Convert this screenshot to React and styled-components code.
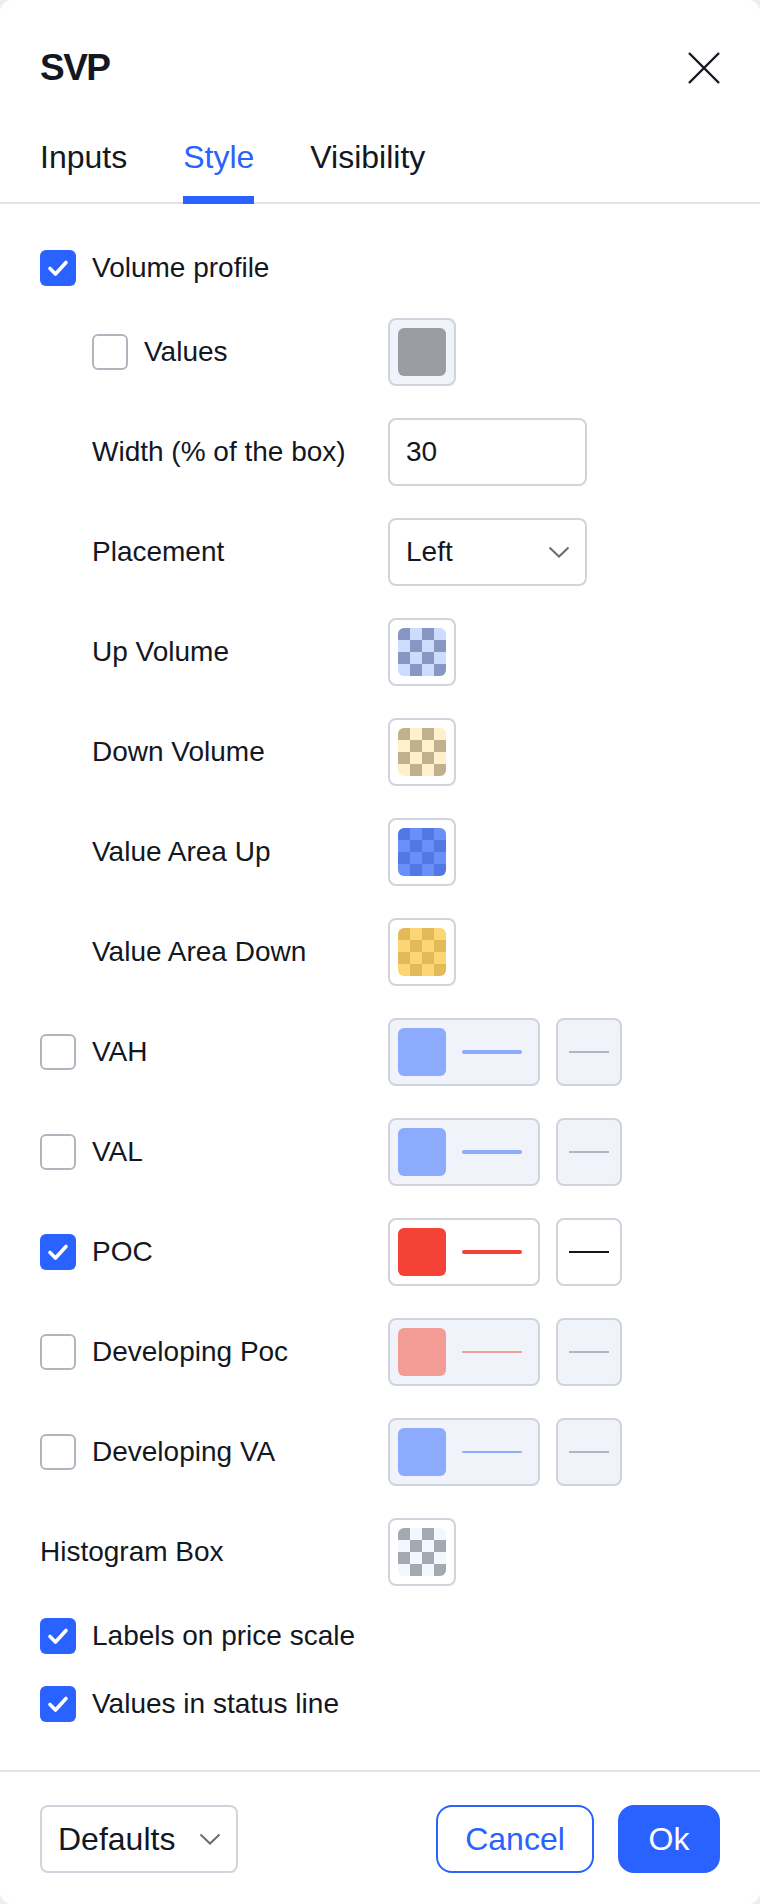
import React from "react";
import styled, {createGlobalStyle, css} from "styled-components";

const GlobalStyle = createGlobalStyle`
    html, body {
        margin: 0;
        padding: 0;
        background: #eceef2;
    }
    body {
        font-family: "Liberation Sans", Arial, sans-serif;
        color: #131722;
    }
    * {
        box-sizing: border-box;
    }
`;

const Dialog = styled.div`
    display: flex;
    flex-direction: column;
    width: 760px;
    height: 1904px;
    background: #fff;
    border-radius: 12px;
    overflow: hidden;
`;

const Header = styled.div`
    padding: 40px 40px 0;
`;

const TitleRow = styled.div`
    display: flex;
    justify-content: space-between;
    align-items: center;
    height: 56px;
`;

const Title = styled.h1`
    margin: 0;
    font-size: 37px;
    line-height: 56px;
    font-weight: 700;
    letter-spacing: -1.5px;
`;

const CloseButton = styled.button`
    display: flex;
    align-items: center;
    justify-content: center;
    width: 56px;
    height: 56px;
    margin-right: -12px;
    padding: 0;
    border: none;
    background: transparent;
    color: #131722;
`;

const Tabs = styled.div`
    display: flex;
    gap: 56px;
    margin: 0 -40px;
    padding: 0 40px;
    border-bottom: 2px solid #e0e3eb;
`;

const Tab = styled.div`
    margin-bottom: -2px;
    padding: 41px 0 27px;
    font-size: 32px;
    line-height: 40px;
    color: ${p => (p.$active ? "#2962ff" : "#131722")};
    ${p => p.$active && css`
        box-shadow: inset 0 -8px 0 #2962ff;
    `}
`;

const Body = styled.div`
    display: flex;
    flex-direction: column;
    gap: 32px;
    flex: 1;
    padding: 46px 40px 48px;
`;

const Row = styled.div`
    display: grid;
    grid-template-columns: 348px auto;
    align-items: center;
    min-height: ${p => (p.$short ? "36px" : "68px")};
`;

const LabelCell = styled.label`
    display: flex;
    align-items: center;
    gap: 16px;
    padding-left: ${p => (p.$indent ? "52px" : "0")};
    font-size: 28px;
    line-height: 36px;
    white-space: nowrap;
`;

const Box = styled.span`
    display: flex;
    align-items: center;
    justify-content: center;
    flex: none;
    width: 36px;
    height: 36px;
    border-radius: 6px;
    background: ${p => (p.$checked ? "#2962ff" : "#fff")};
    border: ${p => (p.$checked ? "none" : "2px solid #b2b5be")};
`;

const Controls = styled.div`
    display: flex;
    align-items: center;
    gap: 16px;
`;

const ColorButton = styled.div`
    display: flex;
    align-items: center;
    width: ${p => (p.$wide ? "152px" : "68px")};
    height: 68px;
    padding: 8px;
    border: 2px solid #d1d4dc;
    border-radius: 8px;
    background: ${p => (p.$disabled ? "#f0f3fa" : "#fff")};
`;

const Swatch = styled.span`
    flex: none;
    width: 48px;
    height: 48px;
    border-radius: 6px;
    background: ${p => p.$color};
    ${p => p.$checker && css`
        background: repeating-conic-gradient(${p.$checker[1]} 0 25%, ${p.$checker[0]} 0 50%) 0 0 / 24px 24px;
    `}
`;

const LineSample = styled.span`
    flex: none;
    width: 60px;
    height: ${p => p.$thickness}px;
    margin-left: 16px;
    border-radius: 2px;
    background: ${p => p.$color};
`;

const LineStyleButton = styled.div`
    display: flex;
    align-items: center;
    justify-content: center;
    width: 66px;
    height: 68px;
    border: 2px solid #d1d4dc;
    border-radius: 8px;
    background: ${p => (p.$disabled ? "#f0f3fa" : "#fff")};

    span {
        width: 40px;
        height: 2px;
        background: ${p => (p.$disabled ? "#b2b5be" : "#131722")};
    }
`;

const TextField = styled.input`
    width: 199px;
    height: 68px;
    padding: 0 16px;
    border: 2px solid #d1d4dc;
    border-radius: 8px;
    font-family: inherit;
    font-size: 28px;
    color: #131722;
    background: #fff;
    outline: none;
`;

const SelectBox = styled.div`
    display: flex;
    align-items: center;
    justify-content: space-between;
    width: ${p => p.$width || 199}px;
    height: 68px;
    padding: 0 15px 0 16px;
    border: 2px solid #d1d4dc;
    border-radius: 8px;
    font-size: ${p => p.$fontSize || 28}px;
    background: #fff;
`;

const Footer = styled.div`
    display: flex;
    align-items: center;
    justify-content: space-between;
    padding: 33px 40px 31px;
    border-top: 2px solid #e0e3eb;
`;

const Actions = styled.div`
    display: flex;
    gap: 24px;
`;

const Button = styled.button`
    height: 68px;
    width: ${p => p.$width}px;
    border-radius: 16px;
    font-family: inherit;
    font-size: 32px;
    border: 2px solid #2962ff;
    color: ${p => (p.$primary ? "#fff" : "#2962ff")};
    background: ${p => (p.$primary ? "#2962ff" : "#fff")};
`;

const Checkbox = ({checked}) => (
    <Box $checked={checked}>
        {checked && (
            <svg width="22" height="18" viewBox="0 0 22 18">
                <path d="M3 9.5l5.5 5.5L19 3.5" fill="none" stroke="#fff" strokeWidth="3.6"
                      strokeLinecap="round" strokeLinejoin="round"/>
            </svg>
        )}
    </Box>
);

const Chevron = () => (
    <svg width="22" height="12" viewBox="0 0 22 12">
        <path d="M1.5 1.5l9.5 9 9.5-9" fill="none" stroke="#6a6d78" strokeWidth="2"/>
    </svg>
);

const LineRow = ({label, checked, color, thickness}) => (
    <Row>
        <LabelCell>
            <Checkbox checked={checked}/>
            {label}
        </LabelCell>
        <Controls>
            <ColorButton $wide $disabled={!checked}>
                <Swatch $color={color}/>
                <LineSample $color={color} $thickness={thickness}/>
            </ColorButton>
            <LineStyleButton $disabled={!checked}><span/></LineStyleButton>
        </Controls>
    </Row>
);

const checkerRows = [
    {label: "Up Volume", checker: ["#8797c3", "#cddcfd"]},
    {label: "Down Volume", checker: ["#c0b08e", "#fff0cc"]},
    {label: "Value Area Up", checker: ["#5079e5", "#6a8ff8"]},
    {label: "Value Area Down", checker: ["#e3ba57", "#fcd574"]},
];

const lineRows = [
    {label: "VAH", checked: false, color: "#8dabfd", thickness: 4},
    {label: "VAL", checked: false, color: "#8dabfd", thickness: 4},
    {label: "POC", checked: true, color: "#f44336", thickness: 4},
    {label: "Developing Poc", checked: false, color: "#f49c96", thickness: 2},
    {label: "Developing VA", checked: false, color: "#8dabfd", thickness: 2},
];

export default function App() {
    return (
        <>
            <GlobalStyle/>
            <Dialog>
                <Header>
                    <TitleRow>
                        <Title>SVP</Title>
                        <CloseButton aria-label="Close">
                            <svg width="32" height="32" viewBox="0 0 32 32">
                                <path d="M1 1l30 30M31 1L1 31" stroke="#131722" strokeWidth="2.4"/>
                            </svg>
                        </CloseButton>
                    </TitleRow>
                    <Tabs>
                        <Tab>Inputs</Tab>
                        <Tab $active>Style</Tab>
                        <Tab>Visibility</Tab>
                    </Tabs>
                </Header>

                <Body>
                    <Row $short>
                        <LabelCell>
                            <Checkbox checked/>
                            Volume profile
                        </LabelCell>
                    </Row>
                    <Row>
                        <LabelCell $indent>
                            <Checkbox checked={false}/>
                            Values
                        </LabelCell>
                        <ColorButton $disabled>
                            <Swatch $color="#9b9da2"/>
                        </ColorButton>
                    </Row>
                    <Row>
                        <LabelCell $indent>Width (% of the box)</LabelCell>
                        <TextField readOnly value="30"/>
                    </Row>
                    <Row>
                        <LabelCell $indent>Placement</LabelCell>
                        <SelectBox>
                            Left
                            <Chevron/>
                        </SelectBox>
                    </Row>
                    {checkerRows.map(r => (
                        <Row key={r.label}>
                            <LabelCell $indent>{r.label}</LabelCell>
                            <ColorButton>
                                <Swatch $checker={r.checker}/>
                            </ColorButton>
                        </Row>
                    ))}
                    {lineRows.map(r => (
                        <LineRow key={r.label} {...r}/>
                    ))}
                    <Row>
                        <LabelCell>Histogram Box</LabelCell>
                        <ColorButton>
                            <Swatch $checker={["#a3a9b2", "#f1f8fc"]}/>
                        </ColorButton>
                    </Row>
                    <Row $short>
                        <LabelCell>
                            <Checkbox checked/>
                            Labels on price scale
                        </LabelCell>
                    </Row>
                    <Row $short>
                        <LabelCell>
                            <Checkbox checked/>
                            Values in status line
                        </LabelCell>
                    </Row>
                </Body>

                <Footer>
                    <SelectBox $width={198} $fontSize={32}>
                        Defaults
                        <Chevron/>
                    </SelectBox>
                    <Actions>
                        <Button $width={158}>Cancel</Button>
                        <Button $width={102} $primary>Ok</Button>
                    </Actions>
                </Footer>
            </Dialog>
        </>
    );
}
